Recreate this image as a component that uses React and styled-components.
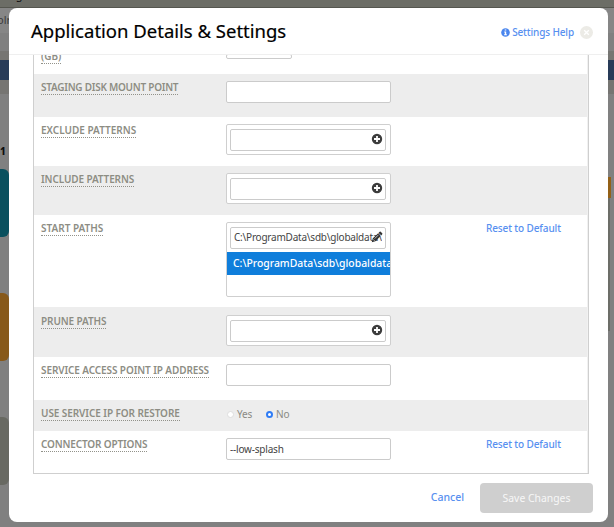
import React from "react";
import styled, { createGlobalStyle } from "styled-components";

const GlobalStyle = createGlobalStyle`
  *, *::before, *::after { box-sizing: border-box; }
  body { margin: 0; font: 10px/14px "Noto Sans", sans-serif; background: #808080; overflow: hidden; }
  button, input { font: inherit; }
`;

const Page = styled.div`
  width: 614px;
  height: 527px;
  overflow: hidden;
  position: relative;
  background: #808080;
  color: #161616;
`;

const TopBar = styled.div`
  height: 8px;
  overflow: hidden;
  padding-left: 9px;
  background: #6c6d66;
  border-bottom: 1px solid #55564f;
  color: #111;
  font-size: 11px;
  line-height: 14px;
  white-space: nowrap;
  span { display: block; margin-top: -12px; }
`;

const Band = styled.div`
  height: ${(p) => p.$h}px;
  background: ${(p) => p.$bg || "transparent"};
  overflow: hidden;
  line-height: 14px;
  font-size: 11px;
`;

const ClippedText = styled.div`
  padding-top: 5px;
  margin-left: -3px;
  color: #3b3b3b;
`;

const Count = styled.div`
  font-weight: 800;
  font-size: 10px;
  color: #0c0c0c;
`;

const Columns = styled.div`
  display: flex;
  justify-content: space-between;
`;

const Tiles = styled.div`
  width: 14px;
`;

const Tile = styled.div`
  height: 68px;
  margin-bottom: 56px;
  border-radius: 0 6px 6px 0;
  width: 9px;
  background: ${(p) => p.$bg};
`;

const Rail = styled.div`
  width: 6px;
  padding-top: 8px;
`;

const RailPiece = styled.div`
  width: ${(p) => p.$w}px;
  height: ${(p) => p.$h}px;
  background: ${(p) => p.$bg};
`;

const Dialog = styled.section`
  position: absolute;
  left: 9px;
  top: 8px;
  width: 599px;
  height: 514px;
  border-radius: 8px;
  background: #fff;
  overflow: hidden;
  display: flex;
  flex-direction: column;
`;

const Header = styled.header`
  height: 47px;
  flex: none;
  display: flex;
  align-items: center;
  padding: 2px 15px 0 22px;
  border-bottom: 1px solid #efefef;
`;

const Title = styled.h1`
  margin: 0;
  flex: 1;
  font-size: 18.5px;
  font-weight: 400;
  line-height: 26px;
  padding-bottom: 2px;
  color: #000;
  -webkit-text-stroke: 0.2px #000;
`;

const Link = styled.a`
  color: #5790f0;
  white-space: nowrap;
  font-weight: 500;
  letter-spacing: ${(p) => p.$ls || 0}px;
`;

const HelpLink = styled(Link)`
  display: flex;
  align-items: center;
  gap: 2px;
`;

const Close = styled.button`
  width: 13px;
  height: 13px;
  margin-left: 6px;
  padding: 0;
  border: 0;
  border-radius: 50%;
  background: #ecebe6;
  display: grid;
  place-items: center;
`;

const Scroller = styled.div`
  height: 419px;
  margin-left: 24px;
  width: 556px;
  overflow: hidden;
  border: 1px solid #cfcfcf;
  border-top: 0;
  box-shadow: inset -1px 0 #f1f1f1;
  flex: none;
`;

const Row = styled.div`
  display: grid;
  grid-template-columns: 185px 260px 1fr;
  align-items: start;
  height: ${(p) => p.$h}px;
  padding: ${(p) => p.$top || 8}px 0 0 7px;
  background: ${(p) => (p.$shade ? "#ededed" : "transparent")};
  margin-right: 1px;

  & > :nth-child(n + 2) {
    margin-top: -1px;
  }
`;

const ClippedRow = styled(Row)`
  padding-top: 0;

  & > :first-child {
    margin-top: -4px;
  }
`;

const Label = styled.span`
  justify-self: start;
  height: 13px;
  line-height: 11px;
  border-bottom: 1px dotted #92928a;
  font-weight: 600;
  color: #8d8d84;
  white-space: nowrap;
  letter-spacing: ${(p) => p.$ls || 0}px;
`;

const TextField = styled.div`
  width: ${(p) => p.$w || 165}px;
  height: ${(p) => p.$h || 22}px;
  padding: 0 3px;
  border: 1px solid #cbcbcb;
  border-radius: 2px;
  background: #fff;
  color: #444;
  line-height: 20px;
  white-space: nowrap;
  overflow: hidden;
  display: flex;
  letter-spacing: ${(p) => p.$ls || 0}px;
`;

const ListBox = styled.div`
  width: 165px;
  height: ${(p) => p.$h || 31}px;
  border: 1px solid #cfcfcf;
  border-radius: 2px;
  background: #fff;
  padding-top: 4px;
  overflow: hidden;
`;

const Entry = styled(TextField)`
  width: 156px;
  margin-left: 3px;
  position: relative;
  line-height: 19px;
`;

const EntryText = styled.span`
  width: 149px;
  overflow: hidden;
  letter-spacing: -0.22px;
`;

const EntryIcon = styled.span`
  position: absolute;
  right: 2px;
  top: 3px;
  display: flex;
`;

const Selected = styled.div`
  height: 23px;
  margin-top: 3px;
  padding-left: 6px;
  line-height: 22px;
  background: #0f7edb;
  color: #fff;
  font-weight: 500;
  font-size: 10.4px;
  white-space: nowrap;
  overflow: hidden;
`;

const Radios = styled.div`
  display: flex;
  align-items: center;
  height: 14px;
  padding: 0 0 0 1px;
  color: #8a8a84;
`;

const Radio = styled.label`
  display: flex;
  align-items: center;
  gap: 3px;
  width: ${(p) => p.$w || 30}px;
  letter-spacing: -0.15px;
`;

const Dot = styled.i`
  width: 7px;
  height: 7px;
  border-radius: 50%;
  background: #fff;
  border: ${(p) => (p.$on ? "2px solid #2f7cf5" : "1px solid #dedede")};
`;

const Footer = styled.footer`
  flex: 1;
  display: flex;
  justify-content: flex-end;
  align-items: flex-start;
  gap: 16px;
  padding: 9px 15px 0 0;
`;

const CancelLink = styled(Link)`
  line-height: 29px;
  font-size: 10.5px;
`;

const Save = styled.button`
  width: 113px;
  height: 30px;
  padding: 0;
  border: 0;
  border-radius: 4px;
  background: #cfcfcf;
  color: #f7f7f7;
  font-size: 10.4px;
  line-height: 30px;
`;

const ResetText = styled(Link)`
  line-height: 12px;
`;

const PlusIcon = () => (
  <svg width="12" height="12" viewBox="0 0 12 12">
    <circle cx="6" cy="6" r="5.2" fill="#3c3c3c" />
    <path d="M6 3v6M3 6h6" stroke="#fff" strokeWidth="1.8" />
  </svg>
);

const PencilIcon = () => (
  <svg width="12" height="12" viewBox="0 0 12 12">
    <path d="M0.8 11.2 1.7 7.6 6.9 2.4 9.6 5.1 4.4 10.3Z M7.6 1.7 8.7 0.7Q9.2 0.3 9.7 0.7L11.2 2.3Q11.7 2.8 11.2 3.3L10.3 4.4Z" fill="#333" />
    <path d="M2.2 8.4 3.6 9.8M3.7 7.6 7.2 4.1" stroke="#fff" strokeWidth="0.7" />
  </svg>
);

const InfoIcon = () => (
  <svg width="9" height="9" viewBox="0 0 9 9">
    <circle cx="4.5" cy="4.5" r="4.3" fill="#4a86ee" />
    <path d="M3.7 1.4h1.6v1.2H3.7zM3.2 3.5h2v2.8h.7v1H3.1v-1h.7V4.5h-.6z" fill="#fff" />
  </svg>
);

const CloseIcon = () => (
  <svg width="7" height="7" viewBox="0 0 7 7">
    <path d="M1.2 1.2 5.8 5.8M5.8 1.2 1.2 5.8" stroke="#fff" strokeWidth="1.3" />
  </svg>
);

const PATH = "C:\\ProgramData\\sdb\\globaldata\\";

const PatternList = () => (
  <ListBox>
    <Entry>
      <EntryIcon><PlusIcon /></EntryIcon>
    </Entry>
  </ListBox>
);

const ResetLink = () => <ResetText $ls={-0.12}>Reset to Default</ResetText>;

export default function App() {
  return (
    <>
      <GlobalStyle />
      <Page>
        <TopBar><span>ogs</span></TopBar>
        <Band $h={25} $bg="#868686"><ClippedText>olr</ClippedText></Band>
        <Band $h={18} />
        <Band $h={9} $bg="#767572" />
        <Band $h={20} $bg="#283b58" />
        <Band $h={14} $bg="#767572" />
        <Band $h={50} />
        <Band $h={25}><Count>1</Count></Band>
        <Columns>
          <Tiles>
            <Tile $bg="#09505e" />
            <Tile $bg="#87591a" />
            <Tile $bg="#686962" />
          </Tiles>
          <Rail>
            <RailPiece $w={3} $h={21} $bg="#936017" />
            <RailPiece $w={2} $h={133} $bg="#6c6d68" />
          </Rail>
        </Columns>
        <Dialog>
          <Header>
            <Title>Application Details &amp; Settings</Title>
            <HelpLink $ls={-0.14}><InfoIcon />Settings Help</HelpLink>
            <Close aria-label="Close"><CloseIcon /></Close>
          </Header>
          <Scroller>
            <ClippedRow $h={19}>
              <Label>(GB)</Label>
              <TextField $w={66} $h={5} />
            </ClippedRow>
            <Row $h={43} $shade>
              <Label $ls={-0.26}>STAGING DISK MOUNT POINT</Label>
              <TextField />
            </Row>
            <Row $h={49}>
              <Label>EXCLUDE PATTERNS</Label>
              <PatternList />
            </Row>
            <Row $h={49} $shade>
              <Label $ls={-0.12}>INCLUDE PATTERNS</Label>
              <PatternList />
            </Row>
            <Row $h={92}>
              <Label>START PATHS</Label>
              <ListBox $h={75}>
                <Entry>
                  <EntryText>{PATH}</EntryText>
                  <EntryIcon><PencilIcon /></EntryIcon>
                </Entry>
                <Selected>{PATH}</Selected>
              </ListBox>
              <ResetLink />
            </Row>
            <Row $h={50} $top={9} $shade>
              <Label $ls={-0.1}>PRUNE PATHS</Label>
              <PatternList />
            </Row>
            <Row $h={43}>
              <Label $ls={-0.1}>SERVICE ACCESS POINT IP ADDRESS</Label>
              <TextField />
            </Row>
            <Row $h={31} $shade>
              <Label $ls={-0.08}>USE SERVICE IP FOR RESTORE</Label>
              <Radios>
                <Radio $w={39}><Dot />Yes</Radio>
                <Radio><Dot $on />No</Radio>
              </Radios>
            </Row>
            <Row $h={43}>
              <Label $ls={-0.15}>CONNECTOR OPTIONS</Label>
              <TextField $ls={-0.2}>--low-splash</TextField>
              <ResetLink />
            </Row>
          </Scroller>
          <Footer>
            <CancelLink>Cancel</CancelLink>
            <Save>Save Changes</Save>
          </Footer>
        </Dialog>
      </Page>
    </>
  );
}
